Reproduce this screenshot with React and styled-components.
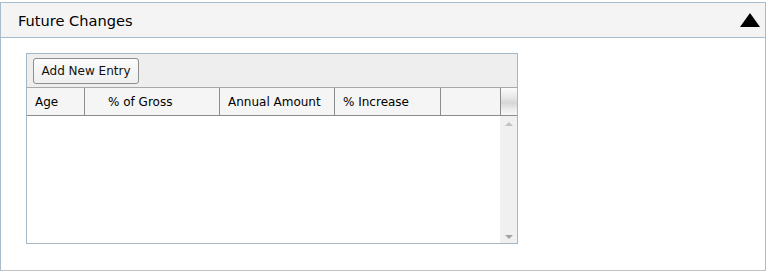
import React from "react";
import styled, { createGlobalStyle } from "styled-components";

const Global = createGlobalStyle`
  html, body { margin: 0; padding: 0; background: #ffffff; }
  body { font-family: "DejaVu Sans", Tahoma, Verdana, sans-serif; color: #111; }
`;

const Panel = styled.section`
  margin-top: 2px;
  width: 766px;
  box-sizing: border-box;
  border: 1px solid #a9bccb;
  border-bottom-color: #c2c2c2;
  background: #fff;
`;

const PanelHeader = styled.header`
  height: 34px;
  display: flex;
  align-items: center;
  justify-content: space-between;
  padding: 0 5px 0 17px;
  background: #f4f4f4;
  border-bottom: 1px solid #a9bccb;
`;

const Title = styled.h2`
  margin: 0;
  font-size: 14.6px;
  font-weight: normal;
  color: #000;
`;

const Toggle = styled.svg`
  width: 20px;
  height: 14px;
  display: block;
`;

const PanelBody = styled.div`
  padding: 15px 0 26px 25px;
`;

const Grid = styled.div`
  width: 492px;
  height: 191px;
  box-sizing: border-box;
  border: 1px solid #a3b7c6;
  display: flex;
  flex-direction: column;
  font-size: 12px;
`;

const Toolbar = styled.div`
  height: 34px;
  box-sizing: border-box;
  display: flex;
  align-items: flex-start;
  padding: 4px 6px;
  background: #eeeeee;
  border-bottom: 1px solid #a8a8a8;
`;

const Button = styled.button`
  height: 26px;
  width: 106px;
  padding: 0;
  font-family: inherit;
  font-size: 12px;
  color: #111;
  background: linear-gradient(#fbfbfb, #f0f0f0);
  border: 1px solid #8e8e8e;
  border-radius: 3px;
`;

const HeaderRow = styled.div`
  height: 28px;
  box-sizing: border-box;
  display: flex;
  background: #f5f5f5;
  border-bottom: 1px solid #8c8c8c;
`;

const HeadCell = styled.div`
  width: ${(p) => p.$w}px;
  box-sizing: border-box;
  padding-left: ${(p) => p.$pad}px;
  border-right: 1px solid #8c8c8c;
  display: flex;
  align-items: center;
  color: #000;
  white-space: nowrap;
`;

const HeadScroll = styled.div`
  flex: 1;
  background: linear-gradient(#fbfbfb 0%, #e8e8e8 35%, #d6d6d6 55%, #ededed 80%, #f6f6f6 100%);
`;

const Body = styled.div`
  flex: 1;
  display: flex;
`;

const Rows = styled.div`
  flex: 1;
  background: #fff;
`;

const ScrollBar = styled.div`
  width: 17px;
  background: #f0f0f0;
  display: flex;
  flex-direction: column;
  justify-content: space-between;
  align-items: center;
  padding: 6px 0 4px;
`;

const Arrow = styled.div`
  width: 0;
  height: 0;
  border-left: 4px solid transparent;
  border-right: 4px solid transparent;
  ${(p) =>
    p.$down
      ? "border-top: 4px solid #a3a3a3;"
      : "border-bottom: 4px solid #c2c2c2;"}
`;

const columns = [
  { label: "Age", w: 58, pad: 8 },
  { label: "% of Gross", w: 135, pad: 23 },
  { label: "Annual Amount", w: 115, pad: 8 },
  { label: "% Increase", w: 106, pad: 8 },
  { label: "", w: 60, pad: 8 },
];

export default function App() {
  return (
    <>
      <Global />
      <Panel>
        <PanelHeader>
          <Title>Future Changes</Title>
          <Toggle viewBox="0 0 20 14">
            <polygon points="10,0 20,14 0,14" fill="#000" />
          </Toggle>
        </PanelHeader>
        <PanelBody>
          <Grid>
            <Toolbar>
              <Button>Add New Entry</Button>
            </Toolbar>
            <HeaderRow>
              {columns.map((c, i) => (
                <HeadCell key={i} $w={c.w} $pad={c.pad}>
                  {c.label}
                </HeadCell>
              ))}
              <HeadScroll />
            </HeaderRow>
            <Body>
              <Rows />
              <ScrollBar>
                <Arrow />
                <Arrow $down />
              </ScrollBar>
            </Body>
          </Grid>
        </PanelBody>
      </Panel>
    </>
  );
}
